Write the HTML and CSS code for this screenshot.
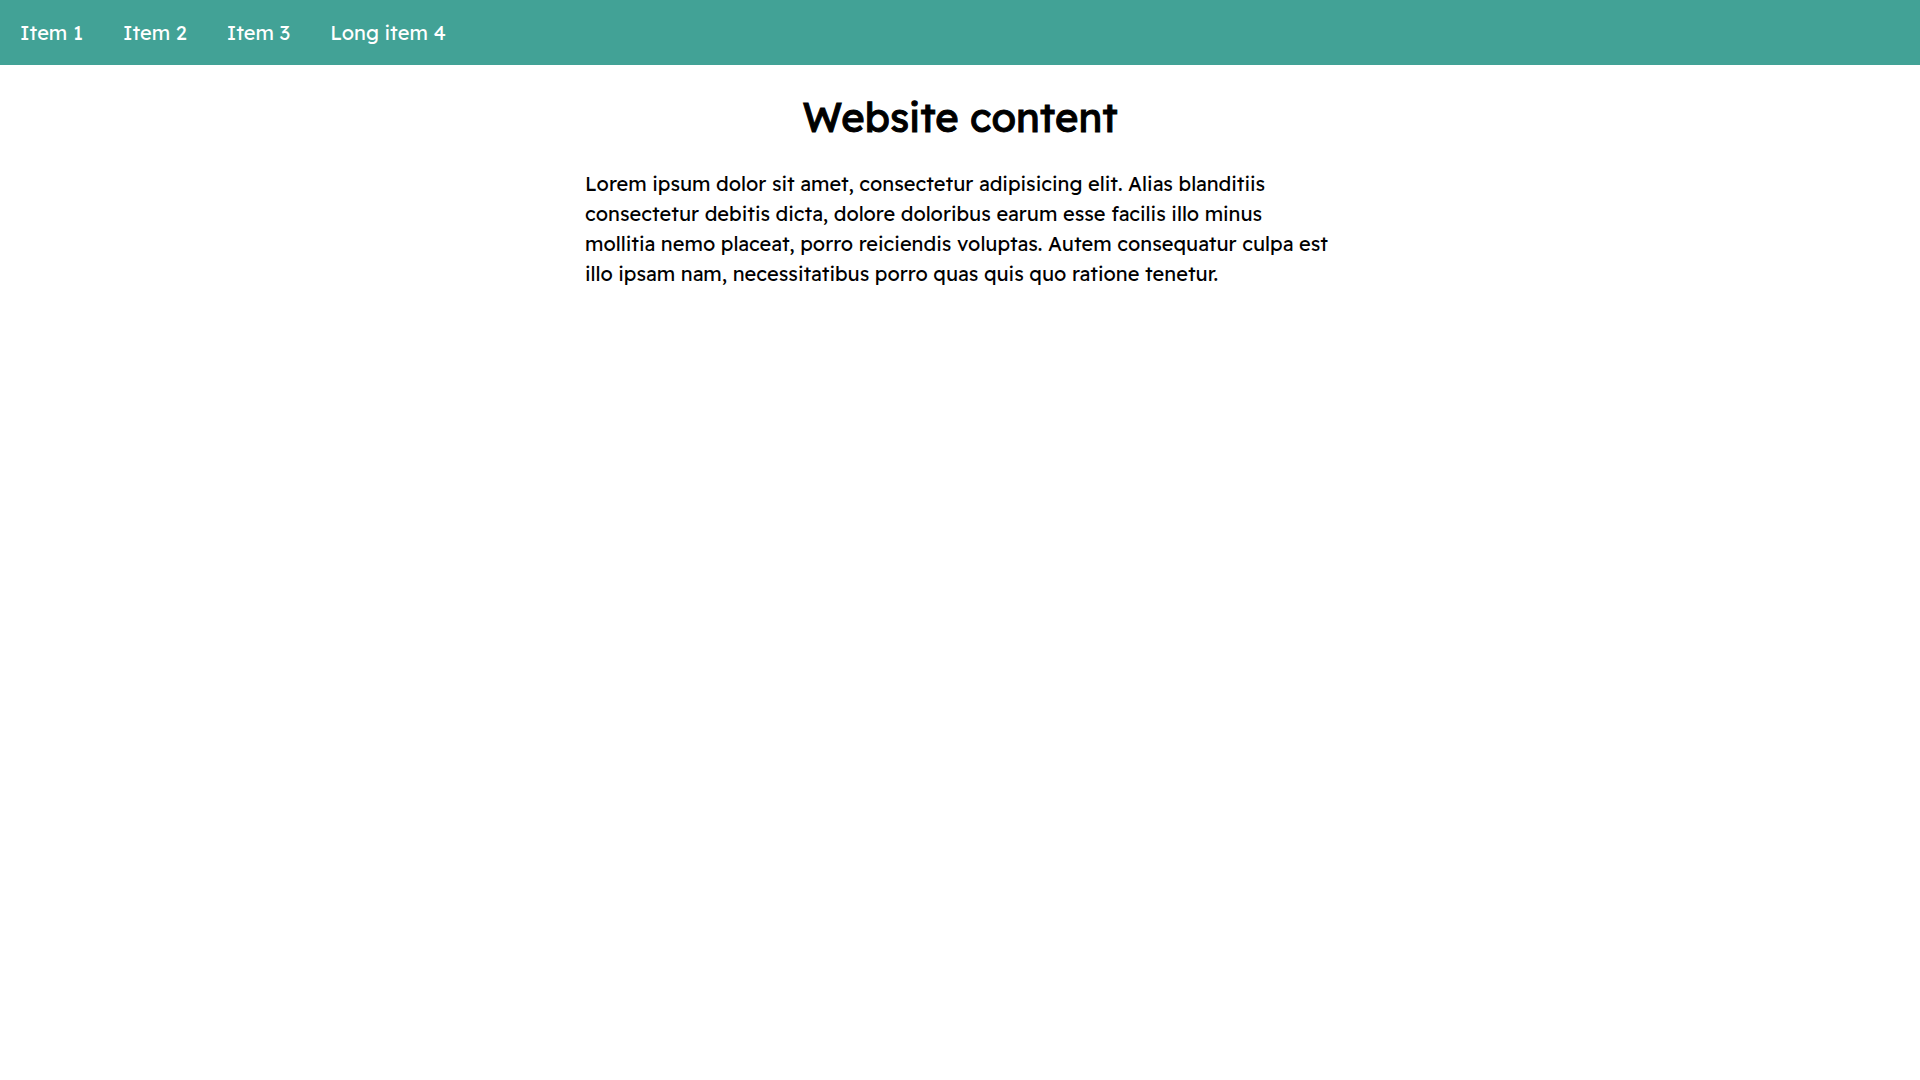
FILE: index.html
```html
<!DOCTYPE html>
<html lang="en">
<head>
<meta charset="utf-8">
<meta name="viewport" content="width=device-width, initial-scale=1">
<title>Website content</title>
<link rel="stylesheet" href="styles.css">
</head>
<body>
<nav class="menu">
  <ul class="menu-list">
    <li><a class="menu-link" href="#">Item 1</a></li>
    <li><a class="menu-link" href="#">Item 2</a></li>
    <li><a class="menu-link" href="#">Item 3</a></li>
    <li><a class="menu-link" href="#">Long item 4</a></li>
  </ul>
</nav>
<main class="content">
  <h1 class="title">Website content</h1>
  <p class="text">Lorem ipsum dolor sit amet, consectetur adipisicing elit. Alias blanditiis consectetur debitis dicta, dolore doloribus earum esse facilis illo minus mollitia nemo placeat, porro reiciendis voluptas. Autem consequatur culpa est illo ipsam nam, necessitatibus porro quas quis quo ratione tenetur.</p>
</main>
</body>
</html>
```

FILE: styles.css
```css
body {
  margin: 0;
  background: #fff;
  color: #000;
  font-family: "Readex Pro", "Lexend Deca", Lexend, Inter, sans-serif;
  font-size: 20px;
  line-height: 30px;
}

.menu {
  background: #42a296;
}

.menu-list {
  display: flex;
  margin: 0;
  padding: 0;
  list-style: none;
}

.menu-link {
  display: block;
  padding: 18px 20px 17px;
  color: #fff;
  text-decoration: none;
}

.content {
  max-width: 750px;
  margin: 0 auto;
  padding: 22px 20px;
}

.title {
  margin: 0 0 22px;
  font-size: 40px;
  font-weight: 400;
  line-height: 60px;
  text-align: center;
  -webkit-text-stroke: 1px currentColor;
}

.text {
  margin: 0;
}
```
